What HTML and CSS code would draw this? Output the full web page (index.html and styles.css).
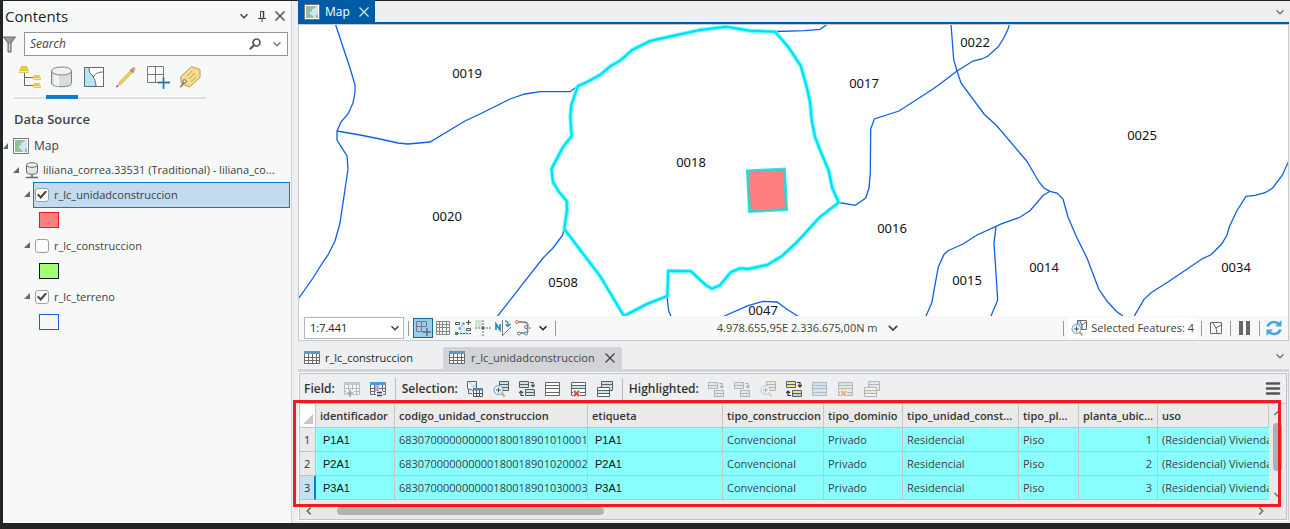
FILE: index.html
```html
<!DOCTYPE html>
<html lang="es">
<head>
<meta charset="utf-8">
<title>Map</title>
<link rel="stylesheet" href="styles.css">
</head>
<body>
<svg class="defs" aria-hidden="true">
  <defs>
    <symbol id="chev" viewBox="0 0 10 10"><path d="M1.5 3.2 5 6.7 8.5 3.2" fill="none" stroke="currentColor" stroke-width="1.5"/></symbol>
    <symbol id="close" viewBox="0 0 10 10"><path d="M.5.5l9 9M9.500.5l-9 9" fill="none" stroke="currentColor" stroke-width="1.3"/></symbol>
    <symbol id="mapicon" viewBox="0 0 16 16"><path d="M.5.5h15v15H.5z" fill="#fff" stroke="#777"/><path d="M2 2h12v12H2z" fill="#cfe6f5"/><path d="M2 2h10l-1 2-3 1v2L6 8v2l3 2 1 2H2zM12 11l2-1v4h-2z" fill="#94bf9b"/></symbol>
    <symbol id="tab" viewBox="0 0 16 16"><path d="M.5 1.500h15v12H.5z" fill="#fff" stroke="#6b6b6b"/><path d="M0 1h16v3H0z" fill="#4a9fd8"/><path d="M.5 7.500h15M.5 10.500h15M4.500 4v10M8.500 4v10M12.500 4v10" stroke="#6b6b6b" fill="none"/></symbol>
    <symbol id="minirows" viewBox="0 0 10 8"><path d="M.5.5h9v6h-9z" fill="#bfe6f5" stroke="#5e5e5e"/><path d="M0 3.500h10" stroke="#5e5e5e"/></symbol>
    <symbol id="miniyel" viewBox="0 0 10 8"><path d="M.5.5h9v6h-9z" fill="#f3e28a" stroke="#5e5e5e"/><path d="M0 3.500h10" stroke="#5e5e5e"/></symbol>
    <symbol id="lens" viewBox="0 0 16 16"><path d="M8.500 12l3 3.500" stroke="#dba05c" stroke-width="2"/><circle cx="5.500" cy="9" r="4.500" fill="#e9f5fc" stroke="#5a9fd0"/><path d="M3 9h5M5.500 6.500v5" stroke="#555"/></symbol>
    <symbol id="stack" viewBox="0 0 16 16"><path d="M4.500.5h11v9h-11z" fill="#bfe6f5" stroke="#5e5e5e"/><path d="M4 3.500h12" stroke="#5e5e5e"/><path d="M.5 6.500h12v9H.5z" fill="#fff" stroke="#5e5e5e"/><path d="M1 10h11v2H1z" fill="#bfe6f5"/><path d="M0 9.500h13M0 12.500h13" stroke="#5e5e5e"/></symbol>
    <symbol id="moverows" viewBox="0 0 16 16"><use href="#minirows" x="0" y="1" width="10" height="8"/><use href="#minirows" x="6" y="9" width="10" height="8"/><path d="M11 2.500h3v4M12 5l2 2 2-2" fill="none" stroke="#555" stroke-width="1.200"/></symbol>
    <path id="sel" d="M578 86 587 82 600 75 610 66.500 621 60 632 50 650 41 677 35 700 30 726 26.700 738 28.700 750 30.700 775 31.700 788 46.700 800.700 65.700 806.700 87 810 102 811.700 120 815 137 821.700 154 828.500 170 832.300 188 838.700 202.500 820 217 797 242 782 256 767 265 748 269 740 268.300 730.700 272.300 720 285.300 712 288.700 706 285.300 697 277 691 271.300 668.300 270.700 667.300 296 647 304 624 316 600 276 564.300 229 567 210 566.700 201 559 192 553 182 551.500 169 563 147 571.700 136 570.300 117 571.300 105Z"/>
  </defs>
</svg>

<aside class="contents">
  <header class="pane-head">
    <h1 class="pane-title">Contents</h1>
    <button class="ib" aria-label="Options"><svg width="10" height="10"><use href="#chev"/></svg></button>
    <button class="ib" aria-label="Pin"><svg width="8" height="11" viewBox="0 0 8 11" fill="none" stroke="#444"><path d="M2.500 7V.5h3V7M0 7.500h8M4 8v3"/><path d="M5.500 0v7" stroke-width="1.500"/></svg></button>
    <button class="ib" aria-label="Close"><svg width="10" height="10"><use href="#close"/></svg></button>
  </header>
  <div class="search-row">
    <svg width="13" height="17" viewBox="0 0 13 17"><path d="M.5 1h12l-4.500 6v9H5V7z" fill="#9a9a9a" stroke="#666"/><path d="M6.500 8v7" stroke="#eee"/></svg>
    <div class="search-box">
      <input class="search-input" type="text" placeholder="Search" aria-label="Search">
      <button class="ib" aria-label="Find"><svg width="12" height="12" viewBox="0 0 12 12"><circle cx="7.500" cy="4.500" r="3.500" fill="none" stroke="#555" stroke-width="1.700"/><path d="M5 7.200.8 11.300" stroke="#555" stroke-width="2"/></svg></button>
      <button class="ib dim" aria-label="Search options"><svg width="10" height="10"><use href="#chev"/></svg></button>
    </div>
  </div>
  <nav class="list-tabs">
    <button class="list-tab" aria-label="Drawing order"><svg width="24" height="24" viewBox="0 0 24 24"><path d="M6.500 8v12.500H15M6.500 12.500H15" stroke="#666" fill="none"/><path d="M3 1h6l2 5v2H1V6zM16 10h5l2 3v2h-8v-2zM16 18h5l2 3v2h-8v-2z" fill="#e3cb45"/><path d="M1 6.500h10M15 13.500h8M15 21.500h8" stroke="#f5e795"/></svg></button>
    <button class="list-tab active" aria-label="Data source"><svg width="24" height="24" viewBox="0 0 24 24"><path d="M1.500 6v12c0 5 20 5 20 0V6" fill="#dcdcdc" stroke="#808080"/><path d="M4 9v11l5 1.500V10z" fill="#f4f4f4"/><ellipse cx="11.500" cy="6" rx="10" ry="4" fill="#f1f1f1" stroke="#808080"/></svg></button>
    <button class="list-tab" aria-label="Selection"><svg width="24" height="24" viewBox="0 0 24 24"><path d="M2.500 2.500h19v19h-19z" fill="#fff" stroke="#666"/><path d="M3 3h4c0 4 1 6 4 8 1 3 3 6 3 10H3z" fill="#b3e4f8"/><path d="M7 3c0 4 1 6 4 8 1 3 3 6 3 10M11.500 12c2-4 5-5 10-5" fill="none" stroke="#666"/><path d="M2.500 2.500h19v19h-19z" fill="none" stroke="#666"/></svg></button>
    <button class="list-tab" aria-label="Editing"><svg width="24" height="24" viewBox="0 0 24 24"><path d="M4.500 18 17 5l2 2L6.500 20z" fill="#ebd257" stroke="#c3a73c" stroke-width=".6"/><path d="M17 4l1.500-1.500q2-1 3 1L20 7z" fill="#e29489"/><path d="m16.500 4.500 3 3" stroke="#777" stroke-width="1.500"/><path d="m4 18-2 4.500L6.500 20z" fill="#dfc899"/><path d="m2 22.500 1-2.500L4.500 21.500z" fill="#555"/></svg></button>
    <button class="list-tab" aria-label="Snapping"><svg width="24" height="24" viewBox="0 0 24 24"><path d="M1.500 1.500h16v16h-16zM9.500 1.500v16M1.500 9.500h16" fill="none" stroke="#777"/><path d="M13 13h10v10h-10z" fill="#f7f9f9"/><path d="M17.500 11.500v12M12 17.500h12" stroke="#bfe2f7" stroke-width="3"/><path d="M17.500 12v12M12 17.500h12" stroke="#246ea6" stroke-width="1.300"/></svg></button>
    <button class="list-tab" aria-label="Labeling"><svg width="24" height="24" viewBox="0 0 24 24"><path d="M2.500 12 13.500 1.500l8.500 3v8L11.500 22l-8-3z" fill="#f1dc8f" stroke="#c49a4a"/><path d="m9 11 5-5m-3 8 6-6m-4 9 5-5" stroke="#c5a866"/><circle cx="6.500" cy="16.500" r="1.800" fill="#fff" stroke="#76603a"/><path d="M6 17c-1 1-1 4-4 5" fill="none" stroke="#777" stroke-width="1.500"/></svg></button>
  </nav>
  <h2 class="section-title">Data Source</h2>
  <ul class="tree">
    <li class="row lv0"><i class="tri"></i><svg width="16" height="16"><use href="#mapicon"/></svg><span>Map</span></li>
    <li class="row lv1"><i class="tri"></i><svg width="14" height="17" viewBox="0 0 14 17"><path d="M1.500 3v7c0 3 11 3 11 0V3" fill="#e5e5e5" stroke="#666"/><ellipse cx="7" cy="3" rx="5.500" ry="2.300" fill="#f6f6f6" stroke="#666"/><path d="M7 12.500V15M1 15.500h12" stroke="#666" stroke-width="1.500"/></svg><span>liliana_correa.33531 (Traditional) - liliana_co...</span></li>
    <li class="row lv2"><i class="tri"></i><label class="layer selected"><input class="cb" type="checkbox" checked>r_lc_unidadconstruccion</label></li>
    <li class="swatch-row"><i class="swatch red"></i></li>
    <li class="row lv2"><i class="tri"></i><label class="layer"><input class="cb" type="checkbox">r_lc_construccion</label></li>
    <li class="swatch-row"><i class="swatch green"></i></li>
    <li class="row lv2"><i class="tri"></i><label class="layer"><input class="cb" type="checkbox" checked>r_lc_terreno</label></li>
    <li class="swatch-row"><i class="swatch blue"></i></li>
  </ul>
</aside>

<main class="work">
  <div class="view-tabs">
    <div class="view-tab"><svg width="16" height="16"><use href="#mapicon"/></svg><span>Map</span><button class="ib light" aria-label="Close map"><svg width="10" height="10"><use href="#close"/></svg></button></div>
    <button class="ib dim" aria-label="Views"><svg width="10" height="10"><use href="#chev"/></svg></button>
  </div>
  <section class="map-pane">
    <svg class="map" viewBox="299 25 989 291" preserveAspectRatio="xMidYMid slice">
      <g class="parcel">
        <path d="M335.700 25 350 68 355 85V92L353 103 348 114 341 122 337 131V140L347 156 348 169 340 223 335 241 328 255 323 262 313 278 299 298"/>
        <path d="M337 131 360 135 380 139 398 143 408 144 430 142 465 121 482 113 510 99 525 94 540 91.700H570L578 86"/>
        <path d="M564 229 562.700 235 553 248 543 258 497.700 316"/>
        <path d="M775 31.500 805 30.700 820 29.300 826.300 25"/>
        <path d="M1009.300 25 1007.700 30 1002.700 40 998 47 988 56 982 59 973 61 957 71 940 84 933 89 899 111 874.300 119 870.700 129 870.300 173 869 188 865.700 198 855.300 205.300 838.700 202.500"/>
        <path d="M951 25 952 37 953.700 60 957 71 961 83 984 114 997 126 1026.700 161 1039 182 1044 188 1050 191.300 1057 193 1063 199 1068 217 1077 238 1087 258 1098.700 289 1107 301 1116 311 1122.700 316"/>
        <path d="M1050 191.300 1043 195.500 1030 210.700 1019 217.700 1000 224.300 996 226.300 977 235 963 244 948 250.700 944 254.500 938.300 267 931.700 303 926 316"/>
        <path d="M996 226.300 994 243 997.700 300 991 316"/>
        <path d="M1288 162.500 1282.500 175 1272.700 188 1265 192.700 1255 195.300 1246 196.300 1236.700 211 1229.300 227 1227 235 1221.700 244 1210.700 255 1203 258.300 1168 282 1151.700 292.300 1144 299.300 1134.300 316"/>
        <path d="M667 296 668.700 311 671 316M724.300 316 748 305.700 763 301.300 777 302 787 309.300 797.700 316"/>
      </g>
      <use href="#sel" class="halo"/>
      <use href="#sel" class="core"/>
      <path class="unit-halo" d="M748 171.500 784 169.500 786 209 750 211Z"/>
      <path class="unit" d="M748 171.500 784 169.500 786 209 750 211Z"/>
      <g class="labels">
        <text x="467" y="78">0019</text><text x="691" y="167">0018</text><text x="864" y="88">0017</text><text x="975" y="47">0022</text><text x="1142" y="140">0025</text><text x="447" y="221">0020</text><text x="563" y="287">0508</text><text x="892" y="233">0016</text><text x="967" y="285">0015</text><text x="1044" y="272">0014</text><text x="1236" y="272">0034</text><text x="763" y="315">0047</text>
      </g>
    </svg>
    <div class="status">
      <div class="group">
        <div class="scale"><select class="scale-select" aria-label="Scale"><option>1:7.441</option></select><svg class="scale-arrow" width="10" height="10"><use href="#chev"/></svg></div>
        <i class="sep"></i>
        <button class="tool on" aria-label="Snap"><svg width="18" height="18" viewBox="0 0 18 18"><path d="M2.500 2.500h10v10h-10zM7.500 2.500v10M2.500 7.500h10" fill="none" stroke="#6b7d8c"/><path d="M13 8v9M9 12.500h9" stroke="#9accec" stroke-width="3"/><path d="M13 9v8M9 13h8" stroke="#444"/></svg></button>
        <button class="tool" aria-label="Grid"><svg width="14" height="14" viewBox="0 0 14 14"><path d="M.5.5h13v13H.5zM3.500 0v14M6.500 0v14M10.500 0v14M0 3.500h14M0 6.500h14M0 10.500h14" fill="none" stroke="#888"/></svg></button>
        <button class="tool" aria-label="Inference"><svg width="16" height="16" viewBox="0 0 16 16"><path d="M4 9 9 3l1 6 4 1v5H5z" fill="#d5eefb"/><path d="M.5 2.500h4v2h-4zM11.500 8.500h4v2h-4z" fill="#fff" stroke="#555"/><path d="M11 2.500h5M13.500 0v5" stroke="#555" stroke-width="1.200"/><path d="m4 9 5-6m-5 6V6m0 3h3M9 3H6m3 0v3" stroke="#3d8cc4" stroke-dasharray="2 1"/><path d="M2 13.500h14" stroke="#555" stroke-dasharray="2 1"/><path d="M0 12h3v3H0z" fill="#3f8f4a"/></svg></button>
        <button class="tool" aria-label="Constraints"><svg width="16" height="16" viewBox="0 0 16 16"><path d="M0 0h7v7H0z" fill="#cfe8cb"/><path d="M0 8h5m6 0h5M8 0v5m0 6v5" stroke="#999" stroke-width="1.500" stroke-dasharray="2 1"/><path d="M8 6v4M6 8h4" stroke="#666" stroke-width="1.500"/></svg></button>
        <button class="tool" aria-label="Ground to grid"><svg width="16" height="16" viewBox="0 0 16 16"><path d="M1 10V4l4 6V4" fill="none" stroke="#2684c6" stroke-width="1.600"/><path d="M7.500 0v16M8 15l8-8" stroke="#777"/><path d="M10 1c3 0 3 2 3 5m-2.500-2L13 6.500 15.500 4" fill="none" stroke="#3d8cc4" stroke-width="1.400"/></svg></button>
        <button class="tool" aria-label="Dynamic constraints"><svg width="16" height="16" viewBox="0 0 16 16"><path d="M2 2h6c6 0 6 5 3 6 2 1 3 5 0 5H2" fill="none" stroke="#777" stroke-width="1.300"/><path d="M12 8h4" stroke="#777"/><circle cx="2" cy="2" r="1.500" fill="#fff" stroke="#d4694f"/><circle cx="11" cy="7" r="1.500" fill="#fff" stroke="#7b6cc4"/><circle cx="11" cy="13.500" r="1.500" fill="#fff" stroke="#3d8cc4"/><circle cx="4" cy="13.500" r="1.500" fill="#fff" stroke="#777"/></svg></button>
        <button class="tool dark" aria-label="More"><svg width="10" height="10"><use href="#chev"/></svg></button>
        <i class="sep"></i>
      </div>
      <div class="group coords"><span>4.978.655,95E 2.336.675,00N m</span><button class="tool" aria-label="Units"><svg width="12" height="12"><use href="#chev"/></svg></button></div>
      <div class="group">
        <i class="sep"></i>
        <button class="selected-count"><svg width="16" height="16" viewBox="0 0 16 16"><path d="M6.500.5h9v9h-9z" fill="#fff" stroke="#666"/><path d="M7 1h3l2 8H7z" fill="#a9dcf2"/><path d="m9 1 2 4 4-3m-4 3v4" fill="none" stroke="#666"/><use href="#lens" width="16" height="16"/></svg>Selected Features: 4</button>
        <i class="sep"></i>
        <button class="tool wide" aria-label="Zoom to selection"><svg width="12" height="12" viewBox="0 0 12 12"><path d="M.5.5h11v11H.5zM3 1l3 5 5-3M6 6l1 5" fill="none" stroke="#666"/></svg></button>
        <i class="sep"></i>
        <button class="tool wide" aria-label="Pause drawing"><svg width="12" height="14" viewBox="0 0 12 14"><path d="M0 0h4v14H0zM7 0h4v14H7z" fill="#666"/></svg></button>
        <i class="sep"></i>
        <button class="tool wide" aria-label="Refresh"><svg width="16" height="16" viewBox="0 0 16 16"><path d="M1.500 6.500C3 2 9 .5 13 4M14.500 9.500C13 14 7 15.500 3 12" fill="none" stroke="#4da3dc" stroke-width="2.500"/><path d="M15.500 0v6.500H9zM.5 16V9.500H7z" fill="#4da3dc"/></svg></button>
      </div>
    </div>
  </section>

  <section class="table-pane">
    <div class="table-tabs">
      <div class="table-tab"><svg width="16" height="14" viewBox="0 0 16 14"><use href="#tab" width="16" height="16" y="-1"/></svg><span>r_lc_construccion</span></div>
      <div class="table-tab current"><svg width="16" height="14" viewBox="0 0 16 14"><use href="#tab" width="16" height="16" y="-1"/></svg><span>r_lc_unidadconstruccion</span><button class="ib" aria-label="Close table"><svg width="10" height="10"><use href="#close"/></svg></button></div>
      <button class="ib dim end" aria-label="Tables"><svg width="10" height="10"><use href="#chev"/></svg></button>
    </div>
    <div class="table-frame">
      <div class="toolbar">
        <span class="tb-label">Field:</span>
        <button class="tb off" aria-label="Add field"><svg width="16" height="16" viewBox="0 0 16 16"><use href="#tab" width="16" height="16"/><path d="M2 9h8v7H2z" fill="#eeeff1"/><path d="M6 9v7M2.500 12.500h7" stroke="#444" stroke-width="2"/></svg></button>
        <button class="tb" aria-label="Calculate field"><svg width="16" height="16" viewBox="0 0 16 16"><use href="#tab" width="16" height="16"/><path d="M5 4h4v7H5z" fill="#b9a5dc"/><path d="M6 10h7v6H6z" fill="#eeeff1"/><path d="M7 11.500h5M7 14.500h5" stroke="#444" stroke-width="1.500"/></svg></button>
        <i class="tb-sep"></i>
        <span class="tb-label">Selection:</span>
        <button class="tb" aria-label="Select by attributes"><svg width="16" height="16" viewBox="0 0 16 16"><path d="M.5.5h9v7l-3 2-6-2z" fill="#fff" stroke="#666"/><path d="M1 1h3l2 3 3-3v6H5L4 4z" fill="#b7e3f6"/><path d="M1.500 8v4.500H5" fill="none" stroke="#666"/><path d="M6.500 7.500h9v8h-9z" fill="#fff" stroke="#555"/><path d="M6 7h10v2.500H6z" fill="#3d8cc4"/><path d="M6 12.500h10M9.500 9v7M12.500 9v7" stroke="#555"/></svg></button>
        <button class="tb" aria-label="Zoom to selected"><svg width="16" height="16" viewBox="0 0 16 16"><path d="M6.500.5h9v9h-9z" fill="#bfe6f5" stroke="#5e5e5e"/><path d="M6 3.500h10M6 6.500h10" stroke="#5e5e5e"/><use href="#lens" width="16" height="16"/></svg></button>
        <button class="tb" aria-label="Switch selection"><svg width="16" height="16" viewBox="0 0 16 16"><use href="#moverows" y="-1" width="16" height="16"/><path d="M5 14.500H2V10m-2 2 2-2 2 2" fill="none" stroke="#444" stroke-width="1.200"/></svg></button>
        <button class="tb" aria-label="Clear selection"><svg width="16" height="16" viewBox="0 0 16 16"><path d="M.5 1.500h14v13H.5zM0 4.500h15M0 7.500h15M0 11.500h15" fill="#fff" stroke="#666"/></svg></button>
        <button class="tb" aria-label="Delete selection"><svg width="16" height="16" viewBox="0 0 16 16"><path d="M.5 1.500h14v13H.5z" fill="#fff" stroke="#666"/><path d="M1 5h13v3H1z" fill="#bfe6f5"/><path d="M0 4.500h15M0 7.500h15M0 11.500h15" stroke="#666"/><path d="M2 9h7v7H2z" fill="#eeeff1"/><path d="m3 10 5 5m0-5-5 5" stroke="#d9502e" stroke-width="2"/></svg></button>
        <button class="tb" aria-label="Copy rows"><svg width="16" height="16"><use href="#stack"/></svg></button>
        <i class="tb-sep"></i>
        <span class="tb-label">Highlighted:</span>
        <button class="tb off" aria-label="Select highlighted"><svg width="16" height="16"><use href="#moverows"/></svg></button>
        <button class="tb off" aria-label="Unselect highlighted"><svg width="16" height="16"><use href="#moverows"/></svg></button>
        <button class="tb off" aria-label="Zoom to highlighted"><svg width="16" height="16" viewBox="0 0 16 16"><path d="M6.500.5h9v9h-9z" fill="#f3e28a" stroke="#5e5e5e"/><path d="M6 3.500h10M6 6.500h10" stroke="#5e5e5e"/><use href="#lens" width="16" height="16"/></svg></button>
        <button class="tb" aria-label="Switch highlighted"><svg width="16" height="16" viewBox="0 0 16 16"><use href="#miniyel" width="10" height="8"/><use href="#miniyel" x="6" y="9" width="10" height="8"/><path d="M7 13h8v2H7z" fill="#9fdcf5"/><path d="M11 1.500h3v4M12 4l2 2 2-2M5 14.500H2V10m-2 2 2-2 2 2" fill="none" stroke="#333" stroke-width="1.200"/></svg></button>
        <button class="tb off" aria-label="Clear highlighted"><svg width="16" height="16" viewBox="0 0 16 16"><path d="M.5 1.500h14v13H.5zM0 4.500h15M0 7.500h15M0 11.500h15" fill="#9fdcf5" stroke="#666"/></svg></button>
        <button class="tb off" aria-label="Delete highlighted"><svg width="16" height="16" viewBox="0 0 16 16"><path d="M.5 1.500h14v13H.5z" fill="#9fdcf5" stroke="#666"/><path d="M1 5h13v6H1z" fill="#f3e28a"/><path d="M0 4.500h15M0 7.500h15M0 11.500h15" stroke="#666"/><path d="M2 10h7v6H2z" fill="#eeeff1"/><path d="m3 10 5 5m0-5-5 5" stroke="#d9502e" stroke-width="2"/></svg></button>
        <button class="tb off" aria-label="Copy highlighted"><svg width="16" height="16" viewBox="0 0 16 16"><use href="#stack" width="16" height="16"/><path d="M1 10h11v2H1z" fill="#f3e28a"/></svg></button>
        <button class="tb menu end" aria-label="Menu"><svg width="16" height="13" viewBox="0 0 16 13"><path d="M2 1.500h12M2 6.500h12M2 11.500h12" stroke="#555" stroke-width="2.600" stroke-linecap="round"/></svg></button>
      </div>
      <div class="grid">
        <div class="grid-body">
          <table class="attrs">
            <colgroup><col class="w16"><col class="w79"><col class="w192"><col class="w135"><col class="w101"><col class="w79"><col class="w116"><col class="w60"><col class="w79"><col></colgroup>
            <thead><tr><th class="corner"><i class="corner-tri"></i></th><th>identificador</th><th>codigo_unidad_construccion</th><th>etiqueta</th><th>tipo_construccion</th><th>tipo_dominio</th><th>tipo_unidad_const...</th><th>tipo_pl...</th><th>planta_ubic...</th><th>uso</th></tr></thead>
            <tbody>
              <tr><th class="num">1</th><td class="tag">P1A1</td><td>683070000000000180018901010001</td><td class="tag">P1A1</td><td>Convencional</td><td>Privado</td><td>Residencial</td><td>Piso</td><td class="r">1</td><td class="cut">(Residencial) Vivienda</td></tr>
              <tr><th class="num">2</th><td class="tag">P2A1</td><td>683070000000000180018901020002</td><td class="tag">P2A1</td><td>Convencional</td><td>Privado</td><td>Residencial</td><td>Piso</td><td class="r">2</td><td class="cut">(Residencial) Vivienda</td></tr>
              <tr><th class="num here">3</th><td class="tag">P3A1</td><td>683070000000000180018901030003</td><td class="tag">P3A1</td><td>Convencional</td><td>Privado</td><td>Residencial</td><td>Piso</td><td class="r">3</td><td class="cut">(Residencial) Vivienda</td></tr>
            </tbody>
          </table>
          <div class="vscroll"><svg class="up" width="9" height="9"><use href="#chev"/></svg><i class="vthumb"></i><svg width="9" height="9"><use href="#chev"/></svg></div>
        </div>
        <div class="hscroll"><svg class="lt" width="10" height="10"><use href="#chev"/></svg><div class="htrack"><i class="hthumb"></i></div><svg class="rt" width="10" height="10"><use href="#chev"/></svg></div>
        <div class="callout"></div>
      </div>
    </div>
  </section>
</main>
</body>
</html>
```

FILE: styles.css
```css
* { box-sizing: border-box; }
body { margin: 0; height: 100vh; min-height: 480px; padding: 1px 0 6px 3px; display: flex; background: #242424; color: #404040; font: 11px/16px "Open Sans", "Noto Sans", sans-serif; overflow: hidden; }
svg { display: block; flex: none; }
button { border: 0; padding: 0; margin: 0; background: none; font: inherit; color: inherit; display: flex; align-items: center; justify-content: center; flex: none; }
i { display: block; flex: none; }
.defs { position: absolute; width: 0; height: 0; }

.contents { width: 289px; flex: none; background: #f7f9f9; border-right: 1px solid #cfd1d3; }
.pane-head { display: flex; align-items: center; height: 30px; padding: 0 2px; }
.pane-title { margin: 0; flex: 1; font-size: 15px; font-weight: 400; line-height: 20px; color: #222; }
.ib { width: 18px; height: 18px; color: #444; }
.ib.light { color: #cfe2f2; }
.ib.dim { color: #777; }
.search-row { display: flex; align-items: center; gap: 8px; padding: 1px 3px 0 0; }
.search-box { flex: 1; display: flex; align-items: center; gap: 4px; height: 24px; border: 1px solid #919599; background: #fff; padding-right: 1px; }
.search-input { flex: 1; min-width: 0; border: 0; outline: 0; padding: 0 5px; background: none; font: italic 12px/16px "Open Sans", sans-serif; }
.search-input::placeholder { color: #444; opacity: 1; }
.list-tabs { display: flex; margin: 8px 0 0 11px; width: 192px; }
.list-tab { width: 32px; height: 35px; padding-bottom: 8px; border-bottom: 2px solid #dfe1e1; }
.list-tab.active { border-bottom: 4px solid #0f7dc6; padding-bottom: 6px; }
.section-title { margin: 11px 0 6px 11px; font-size: 13px; line-height: 18px; font-weight: 600; color: #444; }
.tree { list-style: none; margin: 0; padding: 0; }
.row { display: flex; align-items: center; height: 24px; padding-right: 1px; white-space: nowrap; }
.lv1 { padding: 0 0 0 10px; }
.lv2 { padding-left: 21px; height: 26px; }
.tri { width: 6px; height: 6px; background: #666; clip-path: polygon(100% 0, 100% 100%, 0 100%); margin-right: 4px; }
.lv0 .tri { width: 5px; margin-right: 5px; }
.lv0 span { margin-left: 5px; font-size: 12px; }
.lv1 .tri { margin-right: 6px; }
.lv1 span { margin-left: 4px; }
.lv2 .tri { margin: 0 3px 2px 0; }
.layer { flex: 1; display: flex; align-items: center; gap: 5px; height: 26px; padding-left: 1px; border: 1px solid transparent; }
.layer.selected { background: #c4daee; border-color: #0c79c2; }
.cb { appearance: none; margin: 0; width: 14px; height: 14px; background: #fff; border: 1px solid #a0a0a0; border-radius: 3px; display: grid; place-items: center; }
.cb:checked::before { content: ""; width: 10px; height: 9px; background: #444; clip-path: polygon(0 50%, 14% 34%, 36% 60%, 84% 0, 100% 14%, 38% 94%); }
.swatch-row { height: 25px; padding: 4px 0 0 36px; }
.swatch { width: 20px; height: 16px; border: 1px solid; }
.red { background: #ff7f7f; border-color: #f01818; }
.green { background: #a3ff73; border-color: #111; }
.blue { border-color: #1560e0; }

.work { flex: 1; min-width: 0; display: flex; flex-direction: column; background: #eeeff1; padding: 0 1px 2px 6px; }
.view-tabs { display: flex; align-items: center; justify-content: space-between; height: 23px; border-bottom: 2px solid #005ba6; flex: none; }
.view-tab { display: flex; align-items: center; height: 23px; padding: 0 2px 0 6px; background: #005ba6; color: #fff; font-size: 12px; gap: 5px; }
.map-pane { flex: 1; min-height: 0; display: flex; flex-direction: column; border: 1px solid #c9cacc; background: #fff; }
.map { flex: 1; min-height: 0; width: 100%; }
.parcel path { fill: none; stroke: #0f5fe6; stroke-width: 1.3; }
.halo { fill: none; stroke: #5cffff; stroke-width: 4; stroke-linejoin: round; }
.core { fill: none; stroke: #00dcfa; stroke-width: 2; }
.unit-halo { fill: none; stroke: #27e6ec; stroke-width: 4; }
.unit { fill: #ff7f7f; stroke: #48c8c8; stroke-width: 2; }
.labels { font: 13px "Noto Sans", sans-serif; fill: #111; text-anchor: middle; }
.status { display: flex; justify-content: space-between; align-items: center; height: 24px; flex: none; background: #f7f9f9; padding: 0 0 0 5px; }
.group { display: flex; align-items: center; }
.scale { display: grid; align-items: center; width: 100px; height: 22px; margin-right: 4px; }
.scale-select { grid-area: 1 / 1; width: 100%; height: 22px; appearance: none; border: 1px solid #b5b7b9; background: #fff; border-radius: 0; padding: 0 5px; color: #222; font: 11px/16px "Open Sans", sans-serif; }
.scale-arrow { grid-area: 1 / 1; justify-self: end; margin-right: 4px; pointer-events: none; }
.sep { width: 1px; height: 15px; background: #999; }
.tool { width: 20px; height: 20px; color: #444; }
.tool.on { background: #9accec; border: 1px solid #0f68a8; margin-left: 4px; }
.tool.dark { color: #222; margin-right: 2px; }
.tool.wide { width: 28px; }
.coords { gap: 5px; }
.selected-count { gap: 4px; height: 20px; margin: 0 4px; padding: 0 3px; background: #fff; }

.table-pane { flex: none; padding-top: 6px; }
.table-tabs { display: flex; height: 25px; border-bottom: 3px solid #d3d4d8; }
.table-tab { display: flex; align-items: center; gap: 5px; height: 22px; padding: 0 30px 0 6px; color: #222; }
.table-tab.current { background: #d3d4d8; color: #444; gap: 6px; padding: 0 3px 0 6px; border-radius: 3px 3px 0 0; }
.end { margin-left: auto; }
.table-frame { border: 1px solid #fff; border-right-color: #c9cacc; }
.toolbar { display: flex; align-items: center; height: 31px; margin-right: 1px; padding: 0 0 0 4px; border: 1px solid #bfc1c4; }
.tb-label { font-size: 12px; font-weight: 600; margin-right: 4px; color: #333; }
.tb { width: 26px; height: 24px; }
.tb.off { opacity: .4; }
.tb-sep { width: 1px; height: 22px; background: #b9bbbe; margin: 0 6px 0 4px; }
.grid { position: relative; border: 1px solid #bfc1c4; border-top: 0; margin-right: 1px; background: #e9e9e9; }
.grid-body { display: flex; }
.attrs { flex: 1; width: 0; table-layout: fixed; border-collapse: separate; border-spacing: 0; background: #fff; }
.attrs th, .attrs td { height: 24px; padding: 0 0 0 4px; border-right: 1px solid #c5c5c5; border-bottom: 1px solid #bcc4c4; text-align: left; white-space: nowrap; overflow: hidden; }
.attrs th { background: #eaeaea; font-size: 11px; font-weight: 600; color: #333; }
.attrs td { background: #8affff; }
.attrs .num { font-weight: 400; }
.attrs .here { background: #c4e0f5; border-right: 2px solid #0f7dc6; }
.attrs .corner { padding: 0 3px; background: #fff; }
.corner-tri { width: 10px; height: 10px; margin-top: 7px; background: #c5c5c5; clip-path: polygon(100% 0, 100% 100%, 0 100%); }
.attrs .tag { padding-left: 7px; font: 11px "Liberation Sans", sans-serif; color: #111; }
.attrs .r { text-align: right; padding-right: 5px; }
.attrs .cut { border-right: 0; }
.w16 { width: 16px; } .w60 { width: 60px; } .w79 { width: 79px; } .w101 { width: 101px; } .w116 { width: 116px; } .w135 { width: 135px; } .w192 { width: 193px; }
.vscroll { width: 17px; padding: 5px 4px 1px; display: flex; flex-direction: column; align-items: center; justify-content: space-between; color: #666; }
.up { transform: rotate(180deg); }
.vthumb { width: 9px; height: 48px; border-radius: 4px; background: #b0b0b0; margin-bottom: 14px; }
.hscroll { display: flex; align-items: center; height: 19px; padding: 2px 20px 0 4px; color: #666; }
.lt { transform: rotate(90deg); }
.rt { transform: rotate(-90deg); }
.htrack { flex: 1; padding-left: 23px; }
.hthumb { width: 29%; height: 8px; border-radius: 4px; background: #b3b3b3; }
.callout { position: absolute; inset: -4px 5px 12px -7px; border: 3px solid #f01a22; pointer-events: none; }
```
